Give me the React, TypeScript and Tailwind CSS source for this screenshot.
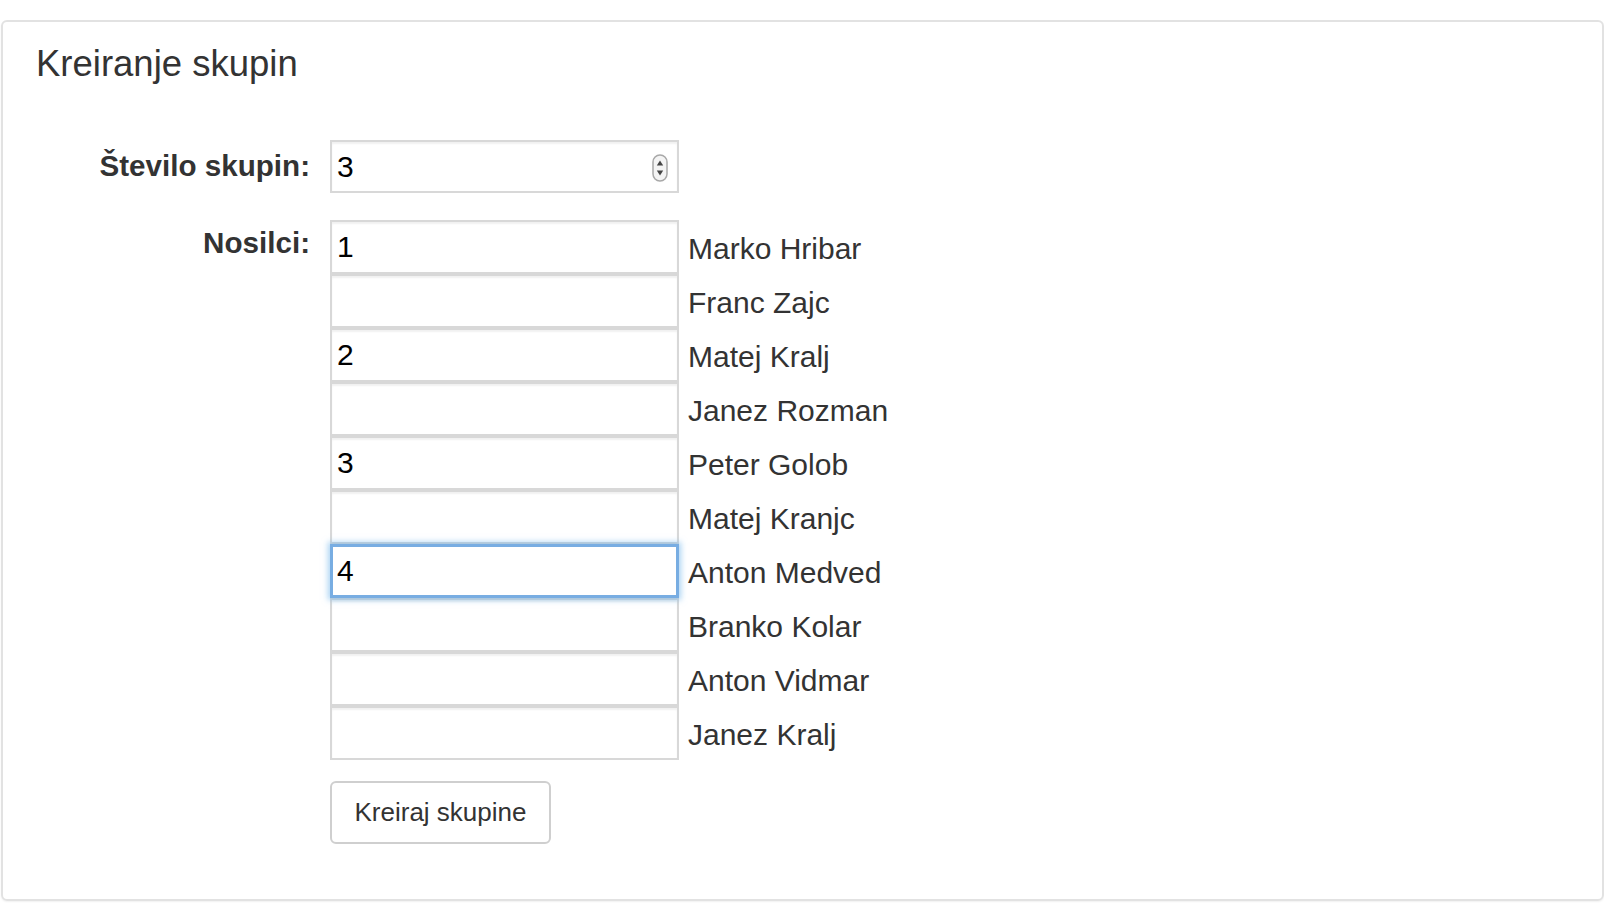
import { useState } from "react"

const nosilci = [
  { name: "Marko Hribar", value: "1" },
  { name: "Franc Zajc", value: "" },
  { name: "Matej Kralj", value: "2" },
  { name: "Janez Rozman", value: "" },
  { name: "Peter Golob", value: "3" },
  { name: "Matej Kranjc", value: "" },
  { name: "Anton Medved", value: "4" },
  { name: "Branko Kolar", value: "" },
  { name: "Anton Vidmar", value: "" },
  { name: "Janez Kralj", value: "" },
]

function Spinner() {
  return (
    <svg className="absolute right-[10px] top-[14px]" width="18" height="28" viewBox="0 0 18 28">
      <rect x="2" y="1" width="14" height="26" rx="7" fill="#f4f4f4" stroke="#a8a8a8" strokeWidth="1.5" />
      <path d="M9 6.5 L12.2 11.5 L5.8 11.5 Z" fill="#444" />
      <path d="M9 21.5 L12.2 16.5 L5.8 16.5 Z" fill="#444" />
    </svg>
  )
}

export default function App() {
  const [values, setValues] = useState(nosilci.map((n) => n.value))
  const [count, setCount] = useState("3")

  return (
    <div className="w-full h-[924px] bg-white pt-[20px] pl-[1px] font-['Liberation_Sans',Arial,sans-serif] text-[#333]">
      <div className="w-[1603px] h-[881px] border-2 border-[#e2e2e2] rounded-[6px] shadow-[0_1px_2px_rgba(0,0,0,0.06)] pt-[22px] pl-[33px]">
        <h3 className="text-[36.5px] leading-[40px] font-normal text-[#333]">Kreiranje skupin</h3>

        <div className="mt-[56px] flex items-center">
          <label className="w-[274px] -ml-[33px] pl-[33px] text-right pr-[20px] text-[29.6px] font-bold box-content">
            Število skupin:
          </label>
          <div className="relative">
            <input
              value={count}
              onChange={(e) => setCount(e.target.value)}
              className="w-[349px] h-[53px] border-2 border-[#d8d8d8] pl-[5px] text-[30px] text-black outline-none shadow-[inset_0_2px_2px_rgba(0,0,0,0.06)] font-['Liberation_Sans',Arial,sans-serif]"
            />
            <Spinner />
          </div>
        </div>

        <div className="mt-[27px] flex items-start">
          <label className="w-[274px] -ml-[33px] pl-[33px] box-content text-right pr-[20px] text-[29.6px] font-bold leading-[46px]">
            Nosilci:
          </label>
          <div className="flex flex-col">
            {nosilci.map((n, i) => {
              const focused = i === 6
              return (
                <div key={n.name} className="flex items-center h-[54px]">
                  <input
                    value={values[i]}
                    onChange={(e) => {
                      const next = [...values]
                      next[i] = e.target.value
                      setValues(next)
                    }}
                    className={
                      focused
                        ? "relative w-[349px] h-[54px] border-[3px] border-[#78ade2] pl-[4px] text-[30px] text-black outline-none shadow-[0_0_6px_2px_rgba(102,175,233,0.55)] font-['Liberation_Sans',Arial,sans-serif]"
                        : "w-[349px] h-[54px] border-2 border-[#d8d8d8] pl-[5px] text-[30px] text-black outline-none shadow-[inset_0_2px_2px_rgba(0,0,0,0.06)] font-['Liberation_Sans',Arial,sans-serif]"
                    }
                  />
                  <span className="ml-[9px] pt-[2px] text-[30px]">{n.name}</span>
                </div>
              )
            })}
            <button className="mt-[21px] w-[221px] h-[63px] border-2 border-[#cfcfcf] rounded-[6px] bg-white text-[26px] text-[#333] font-['Liberation_Sans',Arial,sans-serif]">
              Kreiraj skupine
            </button>
          </div>
        </div>
      </div>
    </div>
  )
}
